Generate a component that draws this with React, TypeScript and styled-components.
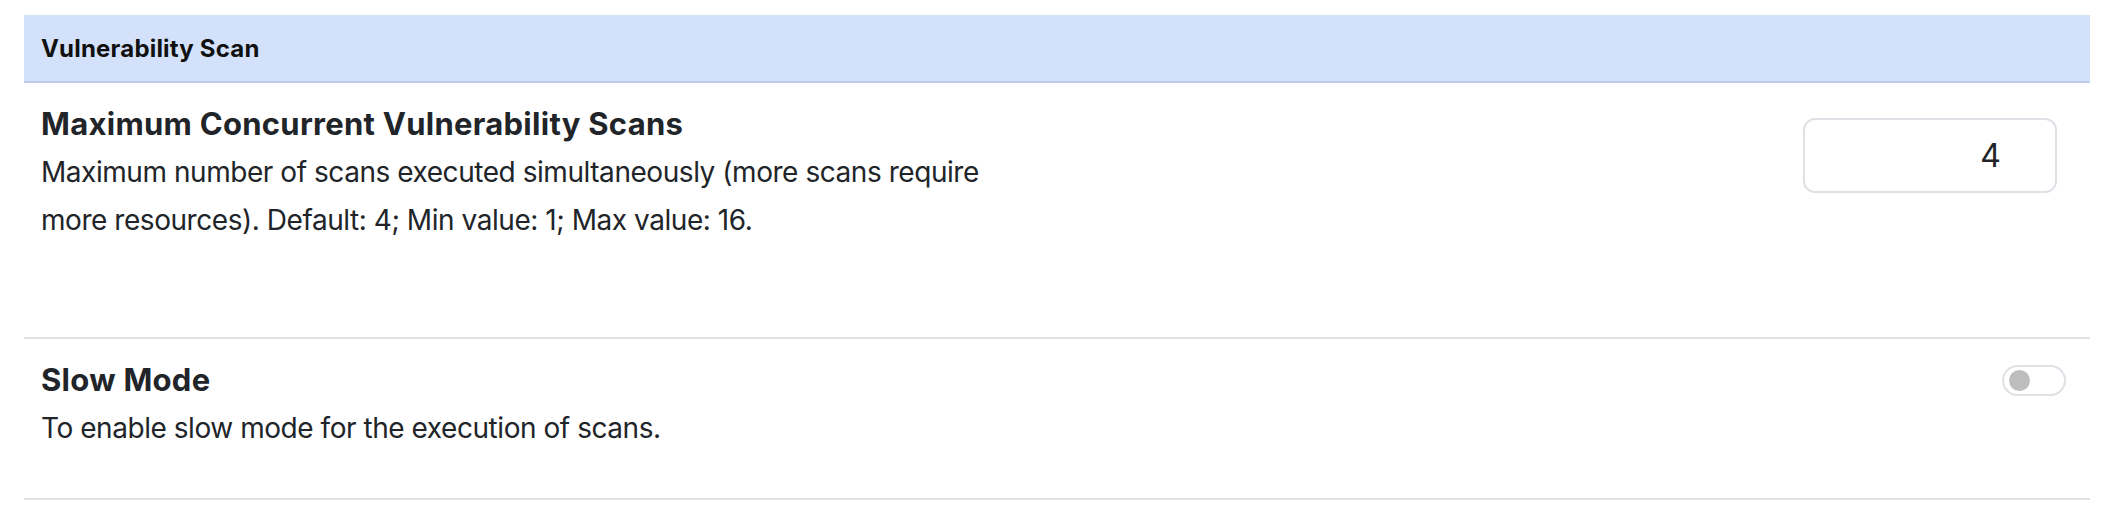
import React, { useState } from "react";
import styled, { createGlobalStyle } from "styled-components";

const GlobalStyle = createGlobalStyle`
  html, body {
    margin: 0;
    padding: 0;
    background: #ffffff;
  }
  body {
    font-family: Inter, "Noto Sans", sans-serif;
    color: #212529;
  }
`;

const Page = styled.div`
  padding: 15px 18px 0 24px;
`;

const SectionHeader = styled.div`
  height: 68px;
  box-sizing: border-box;
  display: flex;
  align-items: center;
  padding-left: 17px;
  background: #d3e1fa;
  border-bottom: 2px solid #bccbe8;
  font-size: 24px;
  font-weight: 700;
  letter-spacing: 0.2px;
  color: #111111;
`;

const SettingRow = styled.div<{ $padBottom: number }>`
  display: flex;
  justify-content: space-between;
  align-items: flex-start;
  padding: 22px 0 ${(p) => p.$padBottom}px 17px;
  border-bottom: 2px solid #dee2e6;
`;

const TextBlock = styled.div`
  max-width: 990px;
`;

const Title = styled.div`
  font-size: 31px;
  font-weight: 700;
  line-height: 37px;
  letter-spacing: 0.28px;
  color: #212529;
`;

const Description = styled.div`
  margin-top: 6px;
  font-size: 28px;
  line-height: 48px;
  letter-spacing: -0.45px;
  color: #212529;
`;

const NumberInput = styled.input`
  width: 254px;
  height: 75px;
  box-sizing: border-box;
  margin: 13px 33px 0 0;
  border: 2px solid #dee2e6;
  border-radius: 12px;
  padding: 0 54px 0 12px;
  font-family: Inter, "Noto Sans", sans-serif;
  font-size: 32px;
  color: #212529;
  text-align: right;
  outline: none;
  -moz-appearance: textfield;
  &::-webkit-outer-spin-button,
  &::-webkit-inner-spin-button {
    -webkit-appearance: none;
    margin: 0;
  }
`;

const Toggle = styled.button<{ $on: boolean }>`
  position: relative;
  width: 64px;
  height: 31px;
  box-sizing: border-box;
  margin: 4px 24px 0 0;
  padding: 0;
  border: 2px solid #dee2e6;
  border-radius: 16px;
  background: ${(p) => (p.$on ? "#0d6efd" : "#ffffff")};
  cursor: pointer;
`;

const Knob = styled.span<{ $on: boolean }>`
  position: absolute;
  top: 3px;
  left: ${(p) => (p.$on ? "37px" : "5px")};
  width: 21px;
  height: 21px;
  border-radius: 50%;
  background: ${(p) => (p.$on ? "#ffffff" : "#bdbdbd")};
`;

export default function App() {
  const [value, setValue] = useState("4");
  const [slow, setSlow] = useState(false);
  return (
    <>
      <GlobalStyle />
      <Page>
        <SectionHeader>Vulnerability Scan</SectionHeader>
        <SettingRow $padBottom={93}>
          <TextBlock>
            <Title>Maximum Concurrent Vulnerability Scans</Title>
            <Description>
              Maximum number of scans executed simultaneously (more scans require more resources).
              Default: 4; Min value: 1; Max value: 16.
            </Description>
          </TextBlock>
          <NumberInput
            type="number"
            value={value}
            min={1}
            max={16}
            onChange={(e) => setValue(e.target.value)}
          />
        </SettingRow>
        <SettingRow $padBottom={46}>
          <TextBlock>
            <Title>Slow Mode</Title>
            <Description>To enable slow mode for the execution of scans.</Description>
          </TextBlock>
          <Toggle $on={slow} onClick={() => setSlow(!slow)} aria-label="Slow Mode">
            <Knob $on={slow} />
          </Toggle>
        </SettingRow>
      </Page>
    </>
  );
}
